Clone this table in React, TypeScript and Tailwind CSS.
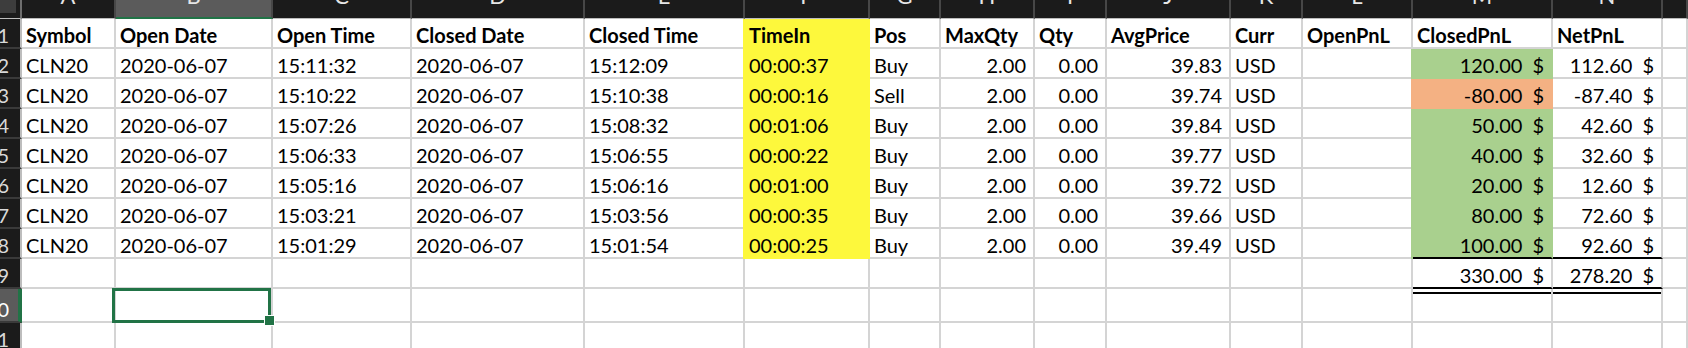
import React from "react";

// Excel-style sheet of closed CLN20 trades, dark mode headers.

type Trade = {
  openTime: string;
  closeTime: string;
  timeIn: string;
  pos: string;
  avg: string;
  closed: string;
  net: string;
  loss?: boolean;
};

const TRADES: Trade[] = [
  { openTime: "15:11:32", closeTime: "15:12:09", timeIn: "00:00:37", pos: "Buy", avg: "39.83", closed: "120.00", net: "112.60" },
  { openTime: "15:10:22", closeTime: "15:10:38", timeIn: "00:00:16", pos: "Sell", avg: "39.74", closed: "-80.00", net: "-87.40", loss: true },
  { openTime: "15:07:26", closeTime: "15:08:32", timeIn: "00:01:06", pos: "Buy", avg: "39.84", closed: "50.00", net: "42.60" },
  { openTime: "15:06:33", closeTime: "15:06:55", timeIn: "00:00:22", pos: "Buy", avg: "39.77", closed: "40.00", net: "32.60" },
  { openTime: "15:05:16", closeTime: "15:06:16", timeIn: "00:01:00", pos: "Buy", avg: "39.72", closed: "20.00", net: "12.60" },
  { openTime: "15:03:21", closeTime: "15:03:56", timeIn: "00:00:35", pos: "Buy", avg: "39.66", closed: "80.00", net: "72.60" },
  { openTime: "15:01:29", closeTime: "15:01:54", timeIn: "00:00:25", pos: "Buy", avg: "39.49", closed: "100.00", net: "92.60" },
];

const LETTERS = ["A", "B", "C", "D", "E", "F", "G", "H", "I", "J", "K", "L", "M", "N", ""];

const HEADERS = [
  "Symbol", "Open Date", "Open Time", "Closed Date", "Closed Time", "TimeIn", "Pos",
  "MaxQty", "Qty", "AvgPrice", "Curr", "OpenPnL", "ClosedPnL", "NetPnL", "",
];

// cell colour sets (side-specific border colours so they never clash)
const PLAIN = "border-r-[#d4d4d4] border-b-[#d4d4d4] pl-[4px]";
const NUM = "border-r-[#d4d4d4] border-b-[#d4d4d4] justify-end pr-[7px]";
const YELLOW = "border-r-[#fdf83c] border-b-[#fdf83c] bg-[#fdf83c] shadow-[-2px_0_0_#fdf83c] pl-[4px]";
const GREEN = "border-r-[#a9d08e] border-b-[#a9d08e] bg-[#a9d08e] shadow-[-2px_0_0_#a9d08e] justify-end pr-[7px]";
const ORANGE = "border-r-[#f4b183] border-b-[#f4b183] bg-[#f4b183] shadow-[-2px_0_0_#f4b183] justify-end pr-[7px]";
const GREEN_LAST = "border-r-[#a9d08e] border-b-black bg-[#a9d08e] shadow-[-2px_0_0_#a9d08e] justify-end pr-[7px]";
const NUM_LAST = "border-r-[#d4d4d4] border-b-black justify-end pr-[7px]";
const TOTAL = "border-r-[#d4d4d4] border-b-black bg-white shadow-[0_3px_0_#fff,0_5px_0_#000] justify-end pr-[7px]";

function Cell({ children, className = "" }: { children?: React.ReactNode; className?: string }) {
  return (
    <div className={`flex items-end border-r-2 border-b-2 whitespace-nowrap leading-[24px] ${className}`}>
      {children}
    </div>
  );
}

function Money({ value }: { value: string }) {
  return (
    <span className="flex gap-[10px]">
      <span>{value}</span>
      <span>$</span>
    </span>
  );
}

function RowNum({ n, active = false }: { n: number; active?: boolean }) {
  return (
    <div
      className={`flex items-end overflow-hidden border-b-2 border-b-[#3a3a3a] leading-[24px] ${
        active
          ? "border-r-4 border-r-[#217346] bg-[#5b5b5b] text-white"
          : "border-r-2 border-r-[#bdbdbd] bg-[#1b1b1b] text-[#d9d9d9]"
      }`}
    >
      <div className="-ml-[31px] w-[40px] shrink-0 text-right">{n}</div>
    </div>
  );
}

function EmptyRow({ n, active = false }: { n: number; active?: boolean }) {
  return (
    <>
      <RowNum n={n} active={active} />
      {LETTERS.map((l) =>
        active && l === "B" ? (
          <Cell key={l} className={`relative ${PLAIN}`}>
            {/* selected cell B10 */}
            <div className="pointer-events-none absolute -top-[1px] -right-[0px] -bottom-[2px] -left-[4px] z-10 border-[3px] border-[#217346]" />
            <div className="absolute -right-[4px] -bottom-[5px] z-20 h-[11px] w-[11px] border border-white bg-[#217346]" />
          </Cell>
        ) : (
          <Cell key={l} className={PLAIN} />
        )
      )}
    </>
  );
}

export default function App() {
  return (
    <div className="h-[348px] w-[1688px] overflow-hidden bg-white font-['Lato',sans-serif] text-[20px] text-black">
      <div className="grid grid-cols-[22px_94px_157px_139px_173px_160px_125px_71px_94px_72px_124px_72px_110px_140px_110px_1fr] grid-rows-[19px_repeat(9,30px)_34px_30px]">
        {/* column letters band */}
        <div className="border-r-2 border-b border-r-[#6e6e6e] border-b-[#bdbdbd] bg-[#1b1b1b]">
          <div className="h-[13px] w-[16px] bg-[#3d3d3d]" />
        </div>
        {LETTERS.map((l) => (
          <div
            key={`h-${l}`}
            className={`flex justify-center overflow-hidden border-r-2 border-r-[#474747] text-[22px] text-[#e6e6e6] ${
              l === "B" ? "border-b-2 border-b-[#217346] bg-[#5b5b5b]" : "border-b border-b-[#bdbdbd] bg-[#1b1b1b]"
            }`}
          >
            <span className="-mt-[17px] leading-[26px]">{l}</span>
          </div>
        ))}

        {/* row 1: titles */}
        <RowNum n={1} />
        {HEADERS.map((h, i) => (
          <Cell key={`t-${i}`} className={`font-bold ${i === 5 ? YELLOW : PLAIN}`}>
            {h}
          </Cell>
        ))}

        {/* rows 2-8: trades */}
        {TRADES.map((t, i) => {
          const last = i === TRADES.length - 1;
          return (
            <React.Fragment key={t.openTime}>
              <RowNum n={i + 2} />
              <Cell className={PLAIN}>CLN20</Cell>
              <Cell className={PLAIN}>2020-06-07</Cell>
              <Cell className={PLAIN}>{t.openTime}</Cell>
              <Cell className={PLAIN}>2020-06-07</Cell>
              <Cell className={PLAIN}>{t.closeTime}</Cell>
              <Cell className={YELLOW}>{t.timeIn}</Cell>
              <Cell className={PLAIN}>{t.pos}</Cell>
              <Cell className={NUM}>2.00</Cell>
              <Cell className={NUM}>0.00</Cell>
              <Cell className={NUM}>{t.avg}</Cell>
              <Cell className={PLAIN}>USD</Cell>
              <Cell className={PLAIN} />
              <Cell className={last ? GREEN_LAST : t.loss ? ORANGE : GREEN}>
                <Money value={t.closed} />
              </Cell>
              <Cell className={last ? NUM_LAST : NUM}>
                <Money value={t.net} />
              </Cell>
              <Cell className={PLAIN} />
            </React.Fragment>
          );
        })}

        {/* row 9: totals */}
        <RowNum n={9} />
        {LETTERS.slice(0, 12).map((l) => (
          <Cell key={`s-${l}`} className={PLAIN} />
        ))}
        <Cell className={TOTAL}>
          <Money value="330.00" />
        </Cell>
        <Cell className={TOTAL}>
          <Money value="278.20" />
        </Cell>
        <Cell className={PLAIN} />

        <EmptyRow n={10} active />
        <EmptyRow n={11} />
      </div>
    </div>
  );
}
